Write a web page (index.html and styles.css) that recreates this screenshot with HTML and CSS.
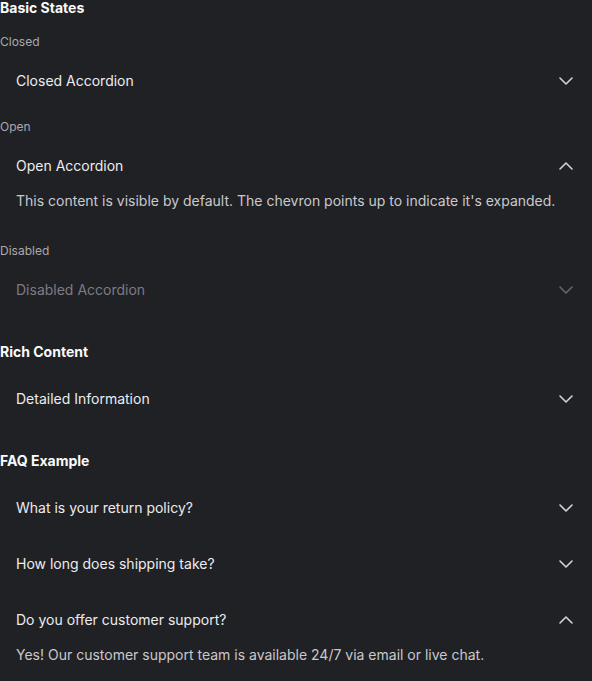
FILE: index.html
```html
<!DOCTYPE html>
<html lang="en">
<head>
<meta charset="utf-8">
<title>Accordion</title>
<link rel="stylesheet" href="styles.css">
</head>
<body>
<main class="page">
  <section class="section section-states">
    <h2 class="section-title">Basic States</h2>
    <div class="groups">
      <div class="group">
        <div class="label">Closed</div>
        <div class="item">
          <button class="trigger"><span>Closed Accordion</span>
            <svg class="chev" viewBox="0 0 24 24"><path d="m6 9 6 6 6-6"/></svg></button>
        </div>
      </div>
      <div class="group">
        <div class="label">Open</div>
        <div class="item">
          <button class="trigger"><span>Open Accordion</span>
            <svg class="chev" viewBox="0 0 24 24"><path d="m6 15 6-6 6 6"/></svg></button>
          <div class="content">This content is visible by default. The chevron points up to indicate it's expanded.</div>
        </div>
      </div>
      <div class="group">
        <div class="label">Disabled</div>
        <div class="item disabled">
          <button class="trigger" disabled><span>Disabled Accordion</span>
            <svg class="chev" viewBox="0 0 24 24"><path d="m6 9 6 6 6-6"/></svg></button>
        </div>
      </div>
    </div>
  </section>

  <section class="section">
    <h2 class="section-title">Rich Content</h2>
    <div class="item">
      <button class="trigger"><span>Detailed Information</span>
        <svg class="chev" viewBox="0 0 24 24"><path d="m6 9 6 6 6-6"/></svg></button>
    </div>
  </section>

  <section class="section">
    <h2 class="section-title">FAQ Example</h2>
    <div class="faq">
      <div class="item">
        <button class="trigger"><span>What is your return policy?</span>
          <svg class="chev" viewBox="0 0 24 24"><path d="m6 9 6 6 6-6"/></svg></button>
      </div>
      <div class="item">
        <button class="trigger"><span>How long does shipping take?</span>
          <svg class="chev" viewBox="0 0 24 24"><path d="m6 9 6 6 6-6"/></svg></button>
      </div>
      <div class="item">
        <button class="trigger"><span>Do you offer customer support?</span>
          <svg class="chev" viewBox="0 0 24 24"><path d="m6 15 6-6 6 6"/></svg></button>
        <div class="content">Yes! Our customer support team is available 24/7 via email or live chat.</div>
      </div>
    </div>
  </section>
</main>
</body>
</html>
```

FILE: styles.css
```css
* { box-sizing: border-box; }
html, body {
  margin: 0;
  padding: 0;
  background: #202125;
}
body {
  font-family: Inter, "Noto Sans", "Liberation Sans", sans-serif;
  color: #ececee;
  overflow: hidden;
}
.page {
  display: flex;
  flex-direction: column;
  gap: 30px;
}
.section {
  display: flex;
  flex-direction: column;
  gap: 15px;
}
.section-states {
  gap: 18px;
}
.section-title {
  margin: 0;
  font-size: 14px;
  line-height: 16px;
  font-weight: 700;
  color: #fafafa;
}
.groups {
  display: flex;
  flex-direction: column;
  gap: 14px;
}
.group {
  display: flex;
  flex-direction: column;
  gap: 7px;
}
.label {
  font-size: 12px;
  line-height: 16px;
  color: #a9a9ae;
}
.faq {
  display: flex;
  flex-direction: column;
  gap: 8px;
}
.trigger {
  display: flex;
  align-items: center;
  justify-content: space-between;
  width: 100%;
  height: 48px;
  padding: 0 14px 0 16px;
  margin: 0;
  border: 0;
  background: transparent;
  font: inherit;
  font-size: 14px;
  line-height: 20px;
  color: #ececee;
  text-align: left;
}
.chev {
  width: 24px;
  height: 24px;
  fill: none;
  stroke: #d4d4d8;
  stroke-width: 1.6;
  stroke-linecap: round;
  stroke-linejoin: round;
}
.content {
  padding: 1px 16px 18px;
  font-size: 14px;
  line-height: 20px;
  color: #c9c9cd;
}
.faq .content {
  padding-bottom: 16px;
}
.disabled .trigger { color: #7c7c82; }
.disabled .chev { stroke: #66666c; }
```
